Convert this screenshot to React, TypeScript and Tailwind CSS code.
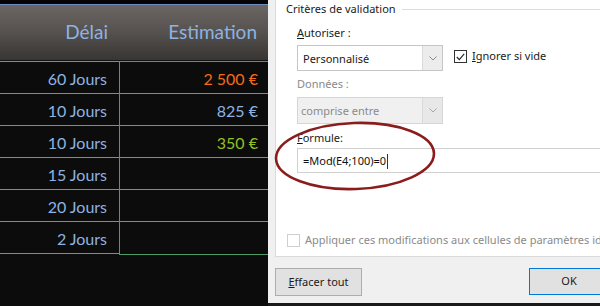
import React from "react";

const rows = [
  { delai: "60 Jours", est: "2 500 €", color: "text-[#f36a1a]" },
  { delai: "10 Jours", est: "825 €", color: "text-[#8db3e2]" },
  { delai: "10 Jours", est: "350 €", color: "text-[#92c020]" },
  { delai: "15 Jours", est: "", color: "" },
  { delai: "20 Jours", est: "", color: "" },
  { delai: "2 Jours", est: "", color: "" },
];

const Chevron: React.FC<{ stroke?: string }> = ({ stroke = "#8a8a8a" }) => (
  <svg width="8" height="5" viewBox="0 0 8 5">
    <polyline points="0.5,0.5 4,4 7.5,0.5" fill="none" stroke={stroke} strokeWidth="1" />
  </svg>
);

const Sheet: React.FC = () => (
  <div className="w-[268px] shrink-0 bg-[#0c0c0c] overflow-hidden font-['Lato',sans-serif]">
    <div className="h-[4px] bg-[#050505]" />
    <div className="border-t border-[#6e8bc3] h-[57px] bg-gradient-to-b from-[#6c6663] via-[#55514e] to-[#383533] flex items-center text-[19px] text-[#8db3e2] border-b border-b-[#111]">
      <div className="w-[120px] text-right pr-[12px]">Délai</div>
      <div className="flex-1 text-right pr-[11px] whitespace-nowrap">Estimation</div>
    </div>
    <div className="flex text-[16px] text-[#8db3e2]">
      <div className="w-[119px] border-t border-[#6e8bc3]">
        {rows.map((r, i) => (
          <div key={i} className="h-[32px] border-b border-[#6e8bc3] flex items-center justify-end pr-[12px] pt-[2px]">
            {r.delai}
          </div>
        ))}
      </div>
      <div className="flex-1 border border-r-0 border-[#4f9c6b]">
        {rows.map((r, i) => (
          <div
            key={i}
            className={`h-[32px] flex items-center justify-end pr-[10px] pt-[2px] ${i < rows.length - 1 ? "border-b border-[#6e8bc3]" : "h-[31px]"} ${r.color}`}
          >
            {r.est}
          </div>
        ))}
      </div>
    </div>
  </div>
);

const Dialog: React.FC = () => (
  <div className="relative w-[332px] min-w-0 bg-[#f0f0f0] pl-[7px] flex flex-col font-['Noto_Sans',sans-serif] text-[11px] text-[#1a1a1a] overflow-hidden">
    <div className="h-[257px] bg-white border-l border-b border-[#dadada] flex flex-col overflow-hidden">
      <div className="flex items-center h-[17px] mt-[1px] pl-[10px]">
        <span className="whitespace-nowrap">Critères de validation</span>
        <div className="flex-1 h-px bg-[#dcdcdc] ml-[6px]" />
      </div>
      <div className="pl-[21px] flex flex-col">
        <div className="mt-[6px] h-[17px] leading-[17px]">
          <span className="underline">A</span>utoriser :
        </div>
        <div className="flex items-center mt-[4px]">
          <div className="w-[146px] h-[26px] border border-[#c6c6c6] flex">
            <div className="flex-1 flex items-center pl-[5px] pt-[2px]">Personnalisé</div>
            <div className="w-[20px] bg-[#ececec] border-l border-[#dadada] flex items-center justify-center">
              <Chevron />
            </div>
          </div>
          <div className="ml-[11px] w-[13px] h-[13px] border border-[#333] flex items-center justify-center -mt-[3px]">
            <svg width="9" height="8" viewBox="0 0 9 8">
              <polyline points="0.8,4 3.3,6.6 8.2,0.8" fill="none" stroke="#222" strokeWidth="1.1" />
            </svg>
          </div>
          <span className="ml-[5px] -mt-[3px] whitespace-nowrap">
            <span className="underline">I</span>gnorer si vide
          </span>
        </div>
        <div className="mt-[4px] h-[17px] leading-[17px] text-[#8a8a8a]">Données :</div>
        <div className="mt-[5px] w-[146px] h-[27px] border border-[#d6d6d6] bg-[#f0f0f0] flex text-[#8a8a8a]">
          <div className="flex-1 flex items-center pl-[3px] pt-[2px]">comprise entre</div>
          <div className="w-[20px] bg-[#e8e8e8] border-l border-[#dadada] flex items-center justify-center">
            <Chevron stroke="#a8a8a8" />
          </div>
        </div>
        <div className="mt-[5px] h-[17px] leading-[17px]">
          <span className="underline">F</span>ormule:
        </div>
        <div className="mt-[2px] h-[25px] w-[320px] shrink-0 border border-[#d0d0d0] flex items-center pl-[5px] pt-[2px] text-[#111]">
          =Mod(E4;100)=0<span className="inline-block w-px h-[15px] bg-[#333] ml-[1px]" />
        </div>
        <div className="flex items-center mt-[59px] -ml-[10px] h-[17px] text-[#8a8a8a] whitespace-nowrap">
          <div className="w-[13px] h-[13px] shrink-0 border border-[#cfcfcf] bg-white" />
          <span className="ml-[5px]">Appliquer ces modifications aux cellules de paramètres identiques</span>
        </div>
      </div>
    </div>
    <div className="flex justify-between mt-[11px]">
      <div className="w-[87px] h-[28px] bg-[#e1e1e1] border border-[#adadad] flex items-center justify-center whitespace-nowrap">
        <span className="underline">E</span>ffacer tout
      </div>
      <div className="w-[80px] h-[27px] bg-[#e1e1e1] border border-[#0078d7] flex items-center justify-center -mr-[9px]">
        OK
      </div>
    </div>
    <svg className="absolute left-[5px] top-[121px]" width="166" height="72" viewBox="0 0 166 72">
      <ellipse cx="82" cy="35" rx="79" ry="33" fill="none" stroke="#8b1c1c" strokeWidth="2.6" transform="rotate(-2 82 35)" />
    </svg>
  </div>
);

export default function App() {
  return (
    <div className="w-[600px] h-[306px] flex overflow-hidden bg-[#0c0c0c]">
      <Sheet />
      <div className="flex-1 min-w-0 flex flex-col">
        <div className="h-[303px] flex">
          <Dialog />
        </div>
        <div className="flex-1 bg-[#1a1a1a]" />
      </div>
    </div>
  );
}
